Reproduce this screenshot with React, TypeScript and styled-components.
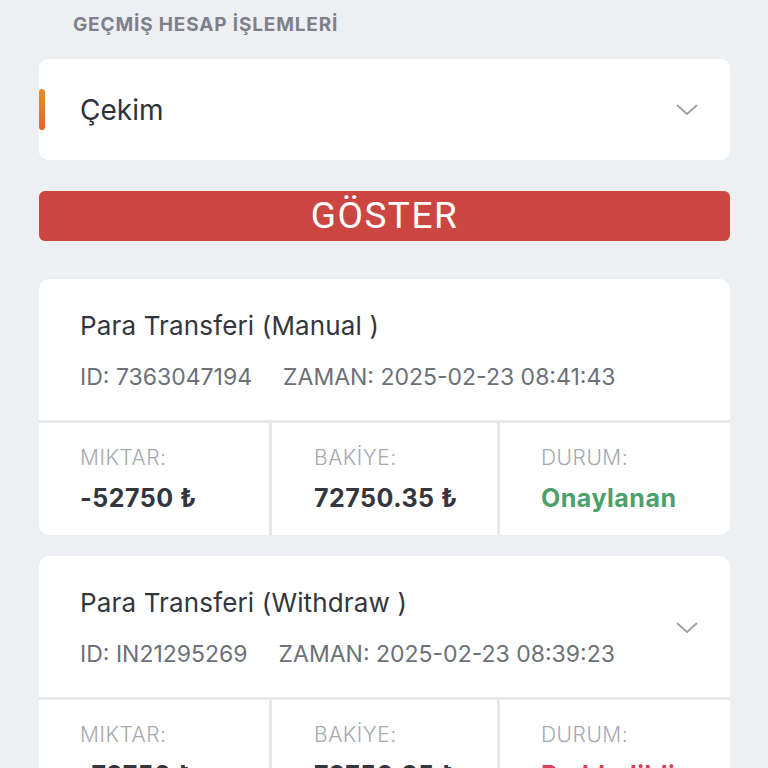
import React from "react";
import styled, { createGlobalStyle } from "styled-components";

const GlobalStyle = createGlobalStyle`
	html, body {
		margin: 0;
		padding: 0;
		background: #eeeff3;
	}
	body {
		font-family: Inter, "Noto Sans", "DejaVu Sans", sans-serif;
		-webkit-font-smoothing: antialiased;
	}
`;

const Page = styled.div`
	width: 768px;
	height: 768px;
	overflow: hidden;
	padding: 0 38px 0 39px;
	box-sizing: border-box;
	display: flex;
	flex-direction: column;

	> * {
		flex-shrink: 0;
	}
`;

const Heading = styled.h2`
	margin: 13px 0 0 34px;
	height: 24px;
	font-size: 19px;
	font-weight: 700;
	color: #7c808a;
	letter-spacing: 0.85px;
	line-height: 24px;
`;

const Select = styled.div`
	margin-top: 22px;
	height: 101px;
	background: #fff;
	border-radius: 9px;
	display: flex;
	align-items: center;
	position: relative;
	padding: 0 32px 0 41px;
`;

const Accent = styled.span`
	position: absolute;
	left: 0;
	top: 30px;
	width: 6px;
	height: 41px;
	border-radius: 3px;
	background: linear-gradient(#ea8a2f, #d9692a);
`;

const SelectValue = styled.span`
	flex: 1;
	font-size: 28px;
	color: #2f3238;
`;

const Chevron = ({ color = "#9d9fa4" }: { color?: string }) => (
	<svg width="22" height="12" viewBox="0 0 22 12">
		<polyline
			points="1.5,1.5 11,10 20.5,1.5"
			fill="none"
			stroke={color}
			strokeWidth="1.8"
			strokeLinecap="round"
			strokeLinejoin="round"
		/>
	</svg>
);

const ShowButton = styled.button`
	margin-top: 31px;
	height: 50px;
	border: none;
	border-radius: 6px;
	background: #cc4641;
	color: #fff;
	font-family: Roboto, "Liberation Sans", sans-serif;
	font-size: 37px;
	letter-spacing: 1.5px;
	padding: 0;
	line-height: 50px;
`;

const Card = styled.div<{ $first?: boolean }>`
	margin-top: ${(p) => (p.$first ? "38px" : "21px")};
	display: grid;
	grid-template-columns: 230px 225px 1fr;
	gap: 3px;
	background: #e6e7eb;
	border-radius: 10px;
	overflow: hidden;
`;

const CardHead = styled.div`
	grid-column: 1 / -1;
	background: #fff;
	height: 141px;
	box-sizing: border-box;
	display: flex;
	align-items: center;
	padding: 3px 32px 0 41px;
`;

const HeadText = styled.div`
	flex: 1;
	display: flex;
	flex-direction: column;
	gap: 20px;
`;

const Title = styled.div`
	font-size: 26px;
	color: #33363d;
	letter-spacing: 0.15px;
	line-height: 32px;
`;

const Meta = styled.div`
	display: flex;
	gap: 31px;
	font-size: 23px;
	color: #6c7077;
	line-height: 30px;
`;

const Cell = styled.div<{ $pad: number }>`
	background: #fff;
	height: 112px;
	box-sizing: border-box;
	padding: 22px 0 0 ${(p) => p.$pad}px;
	display: flex;
	flex-direction: column;
	gap: 12px;
`;

const Label = styled.div`
	font-size: 21px;
	font-weight: 300;
	color: #a6a9ae;
	letter-spacing: 0.5px;
	line-height: 26px;
`;

const Value = styled.div<{ $color?: string }>`
	font-size: 25px;
	font-weight: 700;
	color: ${(p) => p.$color || "#33363d"};
	letter-spacing: 0.5px;
	line-height: 30px;
`;

type Tx = {
	title: string;
	id: string;
	time: string;
	amount: string;
	balance: string;
	status: string;
	statusColor: string;
	expandable?: boolean;
};

const rows: Tx[] = [
	{
		title: "Para Transferi (Manual )",
		id: "7363047194",
		time: "2025-02-23 08:41:43",
		amount: "-52750 ₺",
		balance: "72750.35 ₺",
		status: "Onaylanan",
		statusColor: "#4d9f6c",
	},
	{
		title: "Para Transferi (Withdraw )",
		id: "IN21295269",
		time: "2025-02-23 08:39:23",
		amount: "-72750 ₺",
		balance: "72750.35 ₺",
		status: "Reddedildi",
		statusColor: "#d9415a",
		expandable: true,
	},
];

const App: React.FC = () => {
	return (
		<>
			<GlobalStyle />
			<Page>
				<Heading>GEÇMİŞ HESAP İŞLEMLERİ</Heading>
				<Select>
					<Accent />
					<SelectValue>Çekim</SelectValue>
					<Chevron />
				</Select>
				<ShowButton>GÖSTER</ShowButton>
				{rows.map((r, i) => (
					<Card key={r.id} $first={i === 0}>
						<CardHead>
							<HeadText>
								<Title>{r.title}</Title>
								<Meta>
									<span>ID: {r.id}</span>
									<span>ZAMAN: {r.time}</span>
								</Meta>
							</HeadText>
							{r.expandable && <Chevron />}
						</CardHead>
						<Cell $pad={41}>
							<Label>MIKTAR:</Label>
							<Value>{r.amount}</Value>
						</Cell>
						<Cell $pad={42}>
							<Label>BAKİYE:</Label>
							<Value>{r.balance}</Value>
						</Cell>
						<Cell $pad={41}>
							<Label>DURUM:</Label>
							<Value $color={r.statusColor}>{r.status}</Value>
						</Cell>
					</Card>
				))}
			</Page>
		</>
	);
};

export default App;
